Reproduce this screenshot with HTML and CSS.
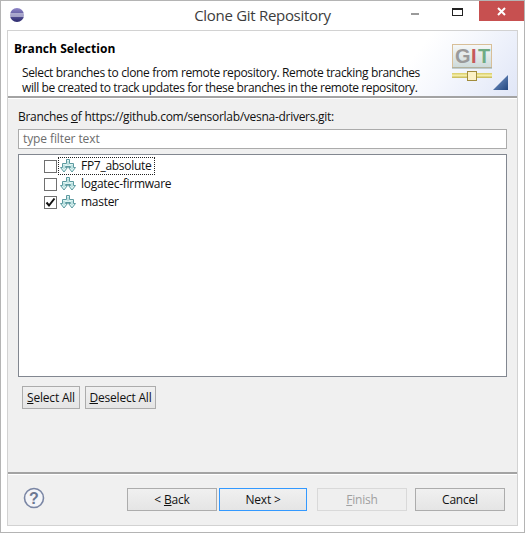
FILE: index.html
```html
<!DOCTYPE html>
<html lang="en">
<head>
<meta charset="utf-8">
<title>Clone Git Repository</title>
<link rel="stylesheet" href="styles.css">
</head>
<body>
<svg class="defs" width="0" height="0" aria-hidden="true">
  <symbol id="branch" viewBox="0 0 16 16">
    <path d="M6.500 1.500H9.500V5.500H13.500V9.500H15.500L12 14L8.500 9.500H10.500V8.500H5.500V9.500H7.500L4 14L0.500 9.500H2.500V5.500H6.500Z" fill="#dcf3f1" stroke="#5c9aa0" stroke-linejoin="round"/>
    <path d="M8 3V7M4 7V11M12 7V11" stroke="#9fd0d2" fill="none"/>
  </symbol>
</svg>
<div class="window">
  <div class="titlebar">
    <div class="title-left">
      <svg class="app-icon" width="16" height="16" viewBox="0 0 16 16">
        <defs>
          <linearGradient id="eclipse" x1="0" y1="0" x2="0" y2="1">
            <stop offset="0" stop-color="#8f86c8"/>
            <stop offset="1" stop-color="#2c2a6e"/>
          </linearGradient>
        </defs>
        <circle cx="8" cy="8" r="7" fill="url(#eclipse)"/>
        <rect x="1" y="6.500" width="14" height="1" fill="#f2f2fa"/>
        <rect x="1" y="8.500" width="14" height="1" fill="#f2f2fa"/>
      </svg>
    </div>
    <div class="title">Clone Git Repository</div>
    <div class="controls">
      <div class="ctl ctl-min"><span class="min-bar"></span></div>
      <div class="ctl ctl-max"><span class="max-box"></span></div>
      <div class="ctl-close">
        <svg width="9" height="9" viewBox="0 0 9 9"><path d="M1 1l7 7M8 1l-7 7" stroke="#fff" stroke-width="2"/></svg>
      </div>
    </div>
  </div>
  <div class="client">
    <header class="banner">
      <div class="banner-text">
        <h1 class="banner-title">Branch Selection</h1>
        <p class="banner-desc"><span class="desc-line">Select branches to clone from remote repository. Remote tracking branches</span><span class="desc-line desc-tight">will be created to track updates for these branches in the remote repository.</span></p>
      </div>
      <svg class="git-logo" width="58" height="48" viewBox="0 0 58 48">
        <defs>
          <linearGradient id="screen" x1="0" y1="0" x2="0" y2="1">
            <stop offset="0" stop-color="#f6f8f8"/>
            <stop offset="1" stop-color="#cddada"/>
          </linearGradient>
          <linearGradient id="corner" x1="0" y1="0" x2="1" y2="1">
            <stop offset="0" stop-color="#7f9fd0"/>
            <stop offset="1" stop-color="#23477f"/>
          </linearGradient>
          <linearGradient id="rail" x1="0" y1="0" x2="0" y2="1">
            <stop offset="0" stop-color="#d8cb64"/>
            <stop offset=".5" stop-color="#f3eda8"/>
            <stop offset="1" stop-color="#c2b450"/>
          </linearGradient>
        </defs>
        <rect x="0.500" y="0.500" width="39" height="23" fill="url(#screen)" stroke="#d8bf98"/>
        <path d="M0 24h40" stroke="#8da3a3"/>
        <text x="3" y="19" class="git-g">G</text>
        <text x="19" y="19" class="git-i">I</text>
        <text x="26" y="19" class="git-t">T</text>
        <rect x="0" y="29" width="40" height="5" fill="url(#rail)"/>
        <rect x="15.500" y="27.500" width="9" height="9" fill="#fbf1c6" stroke="#a18c3c"/>
        <path d="M56 31v15h-15z" fill="url(#corner)"/>
      </svg>
    </header>
    <main class="body">
      <label class="field-label">Branches <u>o</u>f https://github.com/sensorlab/vesna-drivers.git:</label>
      <div class="filter">type filter text</div>
      <div class="tree">
        <div class="row">
          <span class="check"></span>
          <span class="row-item focused">
            <svg class="branch" width="16" height="16"><use href="#branch"/></svg>
            <span class="row-label">FP7_absolute</span>
          </span>
        </div>
        <div class="row">
          <span class="check"></span>
          <span class="row-item">
            <svg class="branch" width="16" height="16"><use href="#branch"/></svg>
            <span class="row-label">logatec-firmware</span>
          </span>
        </div>
        <div class="row">
          <span class="check">
            <svg width="11" height="11" viewBox="0 0 11 11"><path d="M1.500 5.500l2.500 3 5.500-7" fill="none" stroke="#111" stroke-width="2"/></svg>
          </span>
          <span class="row-item">
            <svg class="branch" width="16" height="16"><use href="#branch"/></svg>
            <span class="row-label">master</span>
          </span>
        </div>
      </div>
      <div class="select-btns">
        <button class="btn btn-select"><u>S</u>elect All</button>
        <button class="btn btn-deselect"><u>D</u>eselect All</button>
      </div>
    </main>
    <footer class="footer">
      <svg class="help" width="22" height="22" viewBox="0 0 22 22">
        <circle cx="11" cy="11" r="9.500" fill="#f4f5f8" stroke="#7a86a4" stroke-width="1.600"/>
        <text x="11" y="16.500" class="help-q">?</text>
      </svg>
      <div class="nav">
        <button class="btn nav-btn">&lt; <u>B</u>ack</button>
        <button class="btn nav-btn nav-next">Next &gt;</button>
        <button class="btn nav-btn nav-finish" disabled><u>F</u>inish</button>
        <button class="btn nav-btn">Cancel</button>
      </div>
    </footer>
  </div>
</div>
</body>
</html>
```
FILE: styles.css
```css
* { box-sizing: border-box; }

html, body {
  margin: 0;
  padding: 0;
  width: 525px;
  height: 533px;
  overflow: hidden;
}

body {
  background: #fff;
  font-family: "Open Sans", "Noto Sans", sans-serif;
  font-size: 12px;
  color: #000;
}

.defs { display: block; height: 0; }

.window {
  width: 525px;
  height: 533px;
  border: 1px solid #b4b4b4;
  background: #fff;
  padding: 0 6px 6px;
  display: flex;
  flex-direction: column;
}

.titlebar {
  height: 29px;
  flex: none;
  display: grid;
  grid-template-columns: 1fr auto 1fr;
  align-items: start;
  margin: 0 -1px;
}

.app-icon { display: block; margin: 6px 0 0 3px; }

.title {
  font-size: 15px;
  line-height: 28px;
  color: #3c3c3c;
  letter-spacing: -0.3px;
}

.controls {
  display: flex;
  justify-content: flex-end;
  margin-right: -5px;
}

.ctl {
  width: 43px;
  height: 20px;
  display: flex;
  justify-content: center;
}

.min-bar {
  width: 8px;
  height: 2px;
  margin-top: 12px;
  background: #9a9a9a;
}

.max-box {
  width: 11px;
  height: 8px;
  margin-top: 7px;
  border: 1px solid #222;
  border-top-width: 2px;
}

.ctl-close {
  width: 45px;
  height: 20px;
  background: #c75050;
  display: flex;
  align-items: center;
  justify-content: center;
}

.client {
  flex: 1;
  border: 1px solid #d2d2d2;
  background: #f0f0f0;
  display: flex;
  flex-direction: column;
  min-height: 0;
}

.banner {
  height: 67px;
  flex: none;
  display: flex;
  justify-content: space-between;
  background: linear-gradient(128deg, #fff 76%, #f6f8fd 84%, #e0e6f7 100%);
  border-bottom: 2px solid #a3a3a3;
  box-shadow: 0 1px 0 #fff;
}

.banner-text { padding: 9px 0 0 6px; }

.banner-title {
  margin: 0;
  font-size: 12px;
  font-weight: 700;
  line-height: 18px;
  letter-spacing: 0.05px;
}

.banner-desc {
  margin: 7px 0 0 8px;
  white-space: nowrap;
  color: #111;
}

.desc-line {
  display: block;
  height: 15px;
  line-height: 15px;
  letter-spacing: -0.35px;
}

.desc-line.desc-tight { letter-spacing: -0.4px; }

.git-logo { margin: 13px 7px 0 0; flex: none; }

.git-g, .git-i, .git-t {
  font-family: "Liberation Sans", sans-serif;
  font-size: 20px;
  font-weight: 700;
}

.git-g { fill: #9a9a9a; }
.git-i { fill: #c65a5a; }
.git-t { fill: #6fab84; }

.body {
  flex: 1;
  padding: 10px 10px 0;
  display: flex;
  flex-direction: column;
  min-height: 0;
}

.field-label {
  line-height: 17px;
  letter-spacing: -0.28px;
  color: #111;
}

.filter {
  height: 20px;
  margin-top: 4px;
  background: #fff;
  border: 1px solid #ababab;
  padding-left: 4px;
  line-height: 17px;
  color: #6d6d6d;
  letter-spacing: -0.1px;
}

.tree {
  height: 223px;
  margin-top: 5px;
  background: #fff;
  border: 1px solid #828790;
  padding-top: 2px;
  flex: none;
}

.row {
  height: 18px;
  display: flex;
  align-items: center;
  padding-left: 25px;
}

.check {
  width: 13px;
  height: 13px;
  border: 1px solid #707070;
  background: #fff;
  display: flex;
  align-items: center;
  justify-content: center;
  flex: none;
}

.row-item {
  display: flex;
  align-items: center;
  height: 18px;
  margin-left: 1px;
  padding: 0 2px 0 1px;
  border: 1px dotted transparent;
}

.row-item.focused { border-color: #222; }

.branch { flex: none; }

.row-label {
  margin-left: 5px;
  line-height: 16px;
  letter-spacing: -0.28px;
  color: #111;
}

.select-btns {
  display: flex;
  gap: 5px;
  margin: 9px 0 0 4px;
}

.btn {
  height: 23px;
  padding: 0;
  border: 1px solid #acacac;
  background: linear-gradient(#f0f0f0, #e5e5e5);
  font: inherit;
  color: #111;
  line-height: 19px;
  letter-spacing: -0.2px;
}

.btn-select { width: 58px; }
.btn-deselect { width: 71px; }

.footer {
  height: 53px;
  flex: none;
  border-top: 2px solid #a3a3a3;
  display: flex;
  justify-content: space-between;
  align-items: flex-start;
  padding: 14px 12px 0 15px;
  box-shadow: inset 0 1px 0 #fff;
}

.help { margin-top: -1px; flex: none; }

.help-q {
  font-family: "Liberation Sans", sans-serif;
  font-size: 16px;
  font-weight: 700;
  fill: #6c7892;
  text-anchor: middle;
}

.nav { display: flex; }

.nav-btn { width: 90px; }
.nav-btn + .nav-btn { margin-left: 2px; }

.nav-next {
  width: 88px;
  border-color: #3399ff;
}

.nav-btn.nav-finish {
  margin-left: 10px;
  border-color: #d9d9d9;
  background: #efefef;
  color: #a0a0a0;
}

.nav-finish + .nav-btn { margin-left: 8px; }
```
